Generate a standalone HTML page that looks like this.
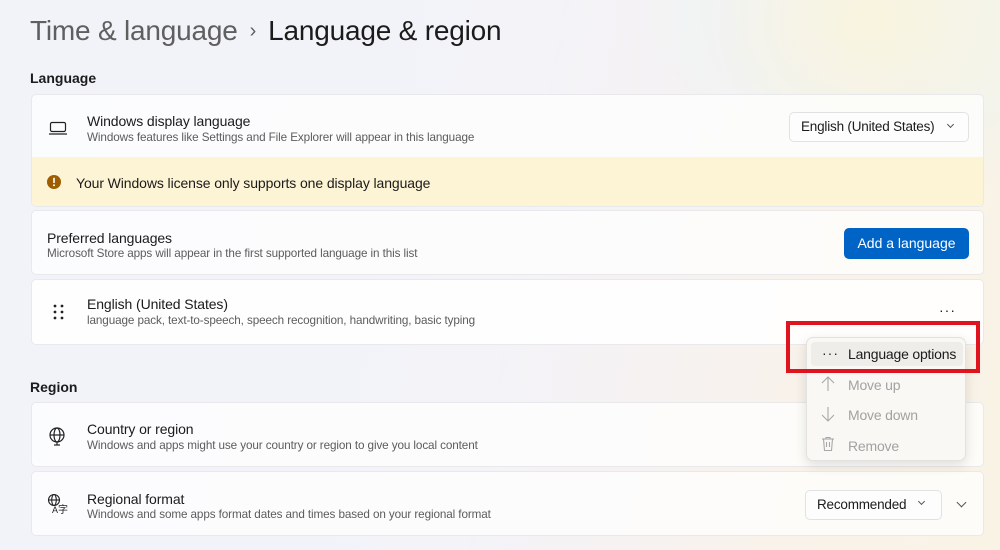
<!DOCTYPE html>
<html><head><meta charset="utf-8"><style>
*{box-sizing:border-box;margin:0;padding:0}
body{width:1000px;height:550px;overflow:hidden;font-family:"Liberation Sans",sans-serif;color:#1b1b1b;
background:linear-gradient(100deg,#f1f3f9 0%,#f3f3f8 50%,#f6f2f2 65%,#f8f2ea 80%,#f9f3e6 100%);position:relative}
.glow{position:absolute;left:640px;top:-60px;width:380px;height:260px;background:radial-gradient(ellipse at 60% 30%,rgba(250,245,215,.6),rgba(230,245,245,.3) 50%,rgba(255,255,255,0) 75%)}
.abs{position:absolute}
h1{position:absolute;left:30px;top:15px;font-size:28px;font-weight:400;letter-spacing:-.2px;white-space:nowrap}
h1 .g{color:#5f5f5f}
h1 .s{color:#5f5f5f;font-size:20px;margin:0 12px;position:relative;top:-3px}
.lbl{position:absolute;left:30px;font-size:14px;font-weight:700;color:#1b1b1b}
.card{position:absolute;left:31px;width:953px;background:rgba(255,255,255,.72);border:1px solid #e9e9ec;border-radius:5px}
.t{position:absolute;font-size:14px;color:#1b1b1b;white-space:nowrap;letter-spacing:-.1px}
.d{position:absolute;font-size:11.7px;color:#5c5c5c;white-space:nowrap;letter-spacing:-.1px}
.dd{position:absolute;background:#fdfdfd;border:1px solid #e2e2e2;border-radius:5px;font-size:13.5px;color:#1b1b1b;letter-spacing:-.2px}
.chev{position:absolute;width:7px;height:7px;border-right:1px solid #555;border-bottom:1px solid #555;transform:rotate(45deg)}
.menu{position:absolute;left:806px;top:337px;width:160px;height:124px;background:#f9f8f5;border:1px solid #e4e2de;border-radius:7px;box-shadow:0 4px 12px rgba(0,0,0,.12)}
.mi{position:absolute;left:41px;font-size:14px;color:#a2a2a2;letter-spacing:-.2px}
</style></head><body>
<div class="glow"></div>
<h1><span class="g">Time &amp; language</span><span class="s">›</span>Language &amp; region</h1>
<div class="lbl" style="top:70px">Language</div>

<div class="card" style="top:94px;height:113px;overflow:hidden">
  <svg class="abs" style="left:16px;top:25px" width="20" height="16" viewBox="0 0 20 16"><rect x="2.5" y="2.5" width="15" height="9" rx="1.5" fill="none" stroke="#222" stroke-width="1.2"/><line x1="1" y1="14" x2="19" y2="14" stroke="#222" stroke-width="1.2"/></svg>
  <div class="t" style="left:55px;top:18px">Windows display language</div>
  <div class="d" style="left:55px;top:36px">Windows features like Settings and File Explorer will appear in this language</div>
  <div class="dd" style="left:757px;top:17px;width:180px;height:30px"><span class="abs" style="left:11px;top:6px">English (United States)</span><span class="chev" style="left:158px;top:9px;width:5px;height:5px"></span></div>
  <div class="abs" style="left:0;top:62px;width:953px;height:51px;background:#fdf4d5"></div>
  <svg class="abs" style="left:14px;top:79px" width="16" height="16" viewBox="0 0 16 16"><circle cx="8" cy="8" r="7" fill="#9d5d00"/><rect x="7.2" y="3.8" width="1.6" height="5.2" fill="#fff"/><circle cx="8" cy="11.3" r="1" fill="#fff"/></svg>
  <div class="t" style="left:44px;top:80px">Your Windows license only supports one display language</div>
</div>

<div class="card" style="top:210px;height:65px">
  <div class="t" style="left:15px;top:19px">Preferred languages</div>
  <div class="d" style="left:15px;top:36px">Microsoft Store apps will appear in the first supported language in this list</div>
  <div class="abs" style="left:812px;top:17px;width:125px;height:31px;background:#0063c6;border-radius:5px;color:#fff;font-size:14px;text-align:center;line-height:31px">Add a language</div>
</div>

<div class="card" style="top:279px;height:66px;background:rgba(255,255,255,.9)">
  <svg class="abs" style="left:21px;top:24px" width="12" height="16" viewBox="0 0 12 16"><g fill="#222"><circle cx="2" cy="2" r="1.4"/><circle cx="9" cy="2" r="1.4"/><circle cx="2" cy="8" r="1.4"/><circle cx="9" cy="8" r="1.4"/><circle cx="2" cy="14" r="1.4"/><circle cx="9" cy="14" r="1.4"/></g></svg>
  <div class="t" style="left:55px;top:16px">English (United States)</div>
  <div class="d" style="left:55px;top:34px">language pack, text-to-speech, speech recognition, handwriting, basic typing</div>
  <div class="abs" style="left:907px;top:22px;font-size:14px;letter-spacing:1px">···</div>
</div>

<div class="lbl" style="top:379px">Region</div>

<div class="card" style="top:402px;height:65px">
  <svg class="abs" style="left:16px;top:24px" width="18" height="19" viewBox="0 0 18 19"><g fill="none" stroke="#222" stroke-width="1.2"><circle cx="9" cy="8" r="7"/><ellipse cx="9" cy="8" rx="3" ry="7"/><line x1="2" y1="8" x2="16" y2="8"/><line x1="9" y1="15" x2="9" y2="18"/><line x1="6" y1="18" x2="12" y2="18"/></g></svg>
  <div class="t" style="left:55px;top:18px">Country or region</div>
  <div class="d" style="left:55px;top:36px">Windows and apps might use your country or region to give you local content</div>
</div>

<div class="card" style="top:471px;height:65px">
  <svg class="abs" style="left:15px;top:21px" width="22" height="22" viewBox="0 0 22 22"><g fill="none" stroke="#222" stroke-width="1.1"><circle cx="7" cy="7" r="5.5"/><ellipse cx="7" cy="7" rx="2.3" ry="5.5"/><line x1="1.5" y1="7" x2="12.5" y2="7"/></g><text x="5" y="20" font-size="9" font-family="Liberation Sans" fill="#222">A</text><text x="11" y="20" font-size="10" font-family="Noto Sans CJK SC" fill="#222">字</text></svg>
  <div class="t" style="left:55px;top:19px">Regional format</div>
  <div class="d" style="left:55px;top:36px">Windows and some apps format dates and times based on your regional format</div>
  <div class="dd" style="left:773px;top:18px;width:137px;height:30px"><span class="abs" style="left:11px;top:6px">Recommended</span><span class="chev" style="left:113px;top:8px;width:5px;height:5px"></span></div>
  <span class="chev" style="left:926px;top:27px"></span>
</div>

<div class="menu">
  <div class="abs" style="left:4px;top:4px;width:152px;height:24px;background:#efede9;border-radius:4px"></div>
  <div class="abs" style="left:15px;top:7px;font-size:14px;color:#222;letter-spacing:1px">···</div>
  <div class="mi" style="top:8px;color:#1b1b1b">Language options</div>
  <svg class="abs" style="left:13px;top:38px" width="16" height="16" viewBox="0 0 16 16"><g fill="none" stroke="#a8a8a8" stroke-width="1.1"><line x1="8" y1="1" x2="8" y2="15"/><polyline points="2,7 8,1 14,7"/></g></svg>
  <div class="mi" style="top:39px">Move up</div>
  <svg class="abs" style="left:13px;top:68px" width="16" height="16" viewBox="0 0 16 16"><g fill="none" stroke="#a8a8a8" stroke-width="1.1"><line x1="8" y1="1" x2="8" y2="15"/><polyline points="2,9 8,15 14,9"/></g></svg>
  <div class="mi" style="top:69px">Move down</div>
  <svg class="abs" style="left:14px;top:98px" width="14" height="16" viewBox="0 0 14 16"><g fill="none" stroke="#a8a8a8" stroke-width="1.1"><line x1="1" y1="3" x2="13" y2="3"/><path d="M5 3V1.5h4V3"/><path d="M2.5 3l1 11.5h7l1-11.5"/><line x1="5.5" y1="6" x2="5.5" y2="11"/><line x1="8.5" y1="6" x2="8.5" y2="11"/></g></svg>
  <div class="mi" style="top:100px">Remove</div>
</div>

<div class="abs" style="left:786px;top:321px;width:194px;height:52px;border:4px solid #e0141e"></div>
</body></html>
